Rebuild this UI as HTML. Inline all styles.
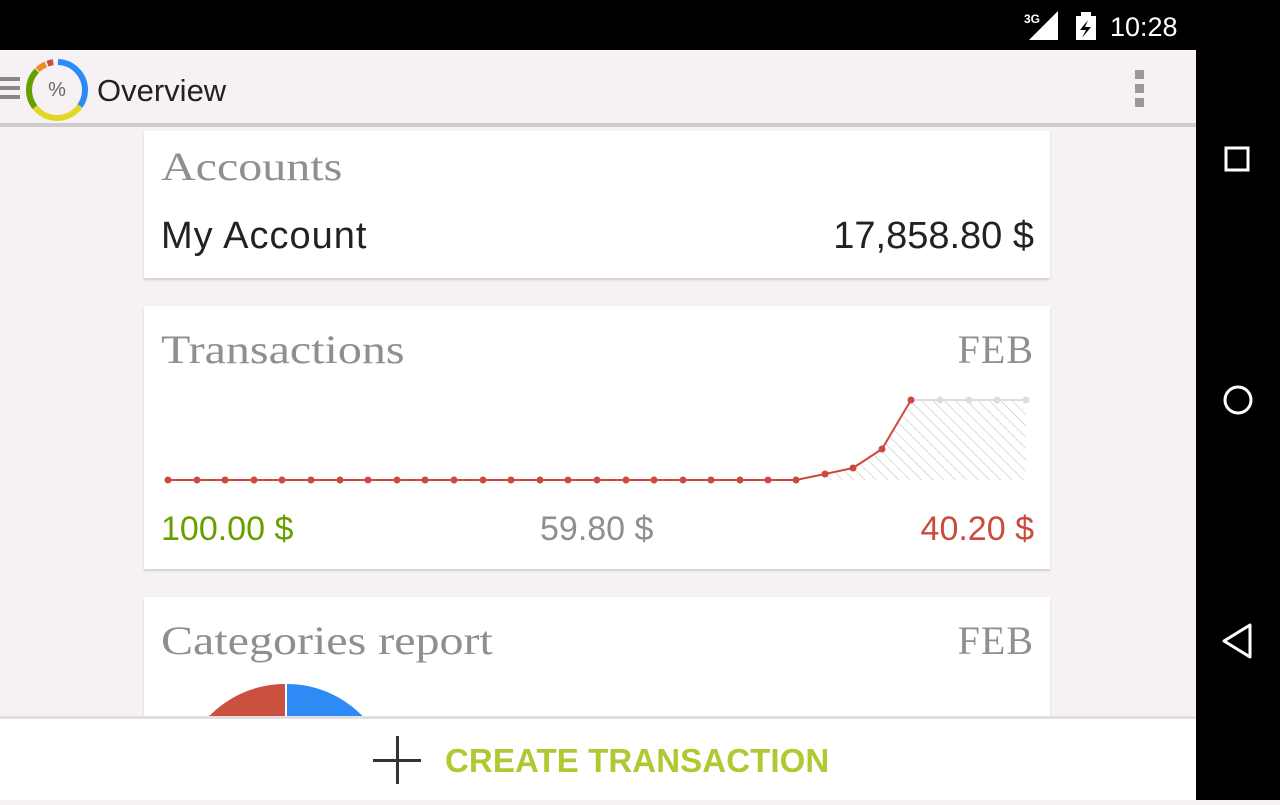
<!DOCTYPE html>
<html><head><meta charset="utf-8"><style>
*{margin:0;padding:0;box-sizing:border-box}
body{width:1280px;height:800px;overflow:hidden;background:#f5f1f5;font-family:"Liberation Sans",sans-serif;position:relative}
.sb{position:absolute;left:0;top:0;width:1280px;height:50px;background:#000;color:#fff}
.nav{position:absolute;left:1196px;top:0;width:84px;height:800px;background:#000}
.ab{position:absolute;left:0;top:50px;width:1196px;height:77px;background:#f5f1f5;border-bottom:4px solid #ccc}
.card{position:absolute;left:144px;width:906px;background:#fff;box-shadow:0 2px 2px rgba(0,0,0,.15)}
.t{position:absolute;font-family:"Liberation Serif",serif;color:#8f8f8f;font-size:40px;transform-origin:0 0;transform:scaleX(1.2)}
.tr{position:absolute;font-family:"Liberation Serif",serif;color:#8f8f8f;font-size:40px;right:16px;letter-spacing:1px}
.bb{position:absolute;left:0;top:716px;width:1196px;height:84px;background:#fff;border-top:3px solid #e2dee2}
</style></head><body>
<div class="sb">
<svg style="position:absolute;left:1024px;top:10px" width="160" height="32">
<text x="0" y="13" font-size="12" fill="#fff" font-family="Liberation Sans" font-weight="bold">3G</text>
<polygon points="5,30 34,30 34,1" fill="#fff"/>
<rect x="52" y="6" width="20" height="24" fill="#fff"/><rect x="57" y="2" width="10" height="5" fill="#fff"/>
<polygon points="64,10 56,20 62,20 58,28 67,17 61,17" fill="#000"/>
<text x="86" y="26" font-size="27" fill="#fff" font-family="Liberation Sans">10:28</text>
</svg>
</div>
<div class="ab">
<div style="position:absolute;left:0;top:27px;width:20px;height:4px;background:#888;box-shadow:0 9px 0 #888,0 18px 0 #888"></div>
<svg style="position:absolute;left:25px;top:8px" width="64" height="64" viewBox="0 0 64 64">
<g fill="none" stroke-width="6">
<circle cx="32" cy="32" r="28" stroke="#2e8af5" stroke-dasharray="60 200" transform="rotate(-88 32 32)"/>
<circle cx="32" cy="32" r="28" stroke="#e2d824" stroke-dasharray="52 200" transform="rotate(35 32 32)"/>
<circle cx="32" cy="32" r="28" stroke="#66a000" stroke-dasharray="40 200" transform="rotate(142 32 32)"/>
<circle cx="32" cy="32" r="28" stroke="#f08a24" stroke-dasharray="10 200" transform="rotate(226 32 32)"/>
<circle cx="32" cy="32" r="28" stroke="#cc5040" stroke-dasharray="6 200" transform="rotate(250 32 32)"/>
</g>
<text x="32" y="38" font-size="20" text-anchor="middle" fill="#666" font-family="Liberation Sans">%</text>
</svg>
<div style="position:absolute;left:97px;top:23px;font-size:31px;color:#222">Overview</div>
<div style="position:absolute;left:1135px;top:20px;width:9px;height:9px;background:#999;box-shadow:0 14px 0 #999,0 28px 0 #999"></div>
</div>
<div class="card" style="top:131px;height:147px">
<div class="t" style="left:17px;top:12px">Accounts</div>
<div style="position:absolute;left:17px;top:84px;font-size:38px;color:#222;letter-spacing:1px">My Account</div>
<div style="position:absolute;right:16px;top:84px;font-size:38px;color:#222">17,858.80 $</div>
</div>
<div class="card" style="top:306px;height:263px">
<div class="t" style="left:17px;top:20px">Transactions</div>
<div class="tr" style="top:20px">FEB</div>
<div style="position:absolute;left:17px;top:204px;font-size:34px;color:#66a000">100.00 $</div>
<div style="position:absolute;left:396px;top:204px;font-size:34px;color:#8f8f8f">59.80 $</div>
<div style="position:absolute;right:16px;top:204px;font-size:34px;color:#cc4a3c">40.20 $</div>
</div>
<svg style="position:absolute;left:0;top:0" width="1196" height="800">
<defs><pattern id="h" width="8" height="8" patternUnits="userSpaceOnUse" patternTransform="rotate(-45)"><line x1="0" y1="0" x2="0" y2="8" stroke="#bbb" stroke-width="1"/></pattern></defs>
<polygon points="825,474 853,468 882,449 911,400 1026,400 1026,480 825,480" fill="url(#h)"/>
<polyline points="911,400 1026,400" stroke="#ddd" stroke-width="2" fill="none"/>
<g fill="#ddd"><circle cx="940" cy="400" r="3.5"/><circle cx="969" cy="400" r="3.5"/><circle cx="997" cy="400" r="3.5"/><circle cx="1026" cy="400" r="3.5"/></g>
<polyline points="168,480 796,480 825,474 853,468 882,449 911,400" stroke="#cc4a3c" stroke-width="2" fill="none"/>
<g fill="#cc4a3c">
<circle cx="168" cy="480" r="3.5"/><circle cx="197" cy="480" r="3.5"/><circle cx="225" cy="480" r="3.5"/><circle cx="254" cy="480" r="3.5"/><circle cx="282" cy="480" r="3.5"/><circle cx="311" cy="480" r="3.5"/><circle cx="340" cy="480" r="3.5"/><circle cx="368" cy="480" r="3.5"/><circle cx="397" cy="480" r="3.5"/><circle cx="425" cy="480" r="3.5"/><circle cx="454" cy="480" r="3.5"/><circle cx="483" cy="480" r="3.5"/><circle cx="511" cy="480" r="3.5"/><circle cx="540" cy="480" r="3.5"/><circle cx="568" cy="480" r="3.5"/><circle cx="597" cy="480" r="3.5"/><circle cx="626" cy="480" r="3.5"/><circle cx="654" cy="480" r="3.5"/><circle cx="683" cy="480" r="3.5"/><circle cx="711" cy="480" r="3.5"/><circle cx="740" cy="480" r="3.5"/><circle cx="768" cy="480" r="3.5"/><circle cx="796" cy="480" r="3.5"/><circle cx="825" cy="474" r="3.5"/><circle cx="853" cy="468" r="3.5"/><circle cx="882" cy="449" r="3.5"/><circle cx="911" cy="400" r="3.5"/>
</g>
</svg>
<div class="card" style="top:597px;height:130px;overflow:hidden">
<div class="t" style="left:17px;top:20px">Categories report</div>
<div class="tr" style="top:20px">FEB</div>
<svg style="position:absolute;left:0;top:0" width="906" height="130">
<path d="M143,192 L143,87 A105,105 0 0 1 248,192 Z" fill="#2e8af5"/>
<path d="M141,192 L60,125 A105,105 0 0 1 141,87 Z" fill="#cc5040"/>
<path d="M58,123 L66,118 L68,130 Z" fill="#66a000"/>
</svg>
</div>
<div class="bb">
<div style="position:absolute;left:373px;top:40px;width:48px;height:3px;background:#333"></div>
<div style="position:absolute;left:396px;top:17px;width:3px;height:48px;background:#333"></div>
<div style="position:absolute;left:445px;top:23px;font-size:33px;font-weight:bold;color:#b0c832;letter-spacing:0.1px">CREATE TRANSACTION</div>
</div>
<div class="nav">
<svg width="84" height="800">
<rect x="30" y="148" width="22" height="22" fill="none" stroke="#fff" stroke-width="3"/>
<circle cx="42" cy="400" r="13" fill="none" stroke="#fff" stroke-width="3"/>
<polygon points="54,625 54,657 28,641" fill="none" stroke="#fff" stroke-width="3" stroke-linejoin="round"/>
</svg>
</div>
</body></html>
